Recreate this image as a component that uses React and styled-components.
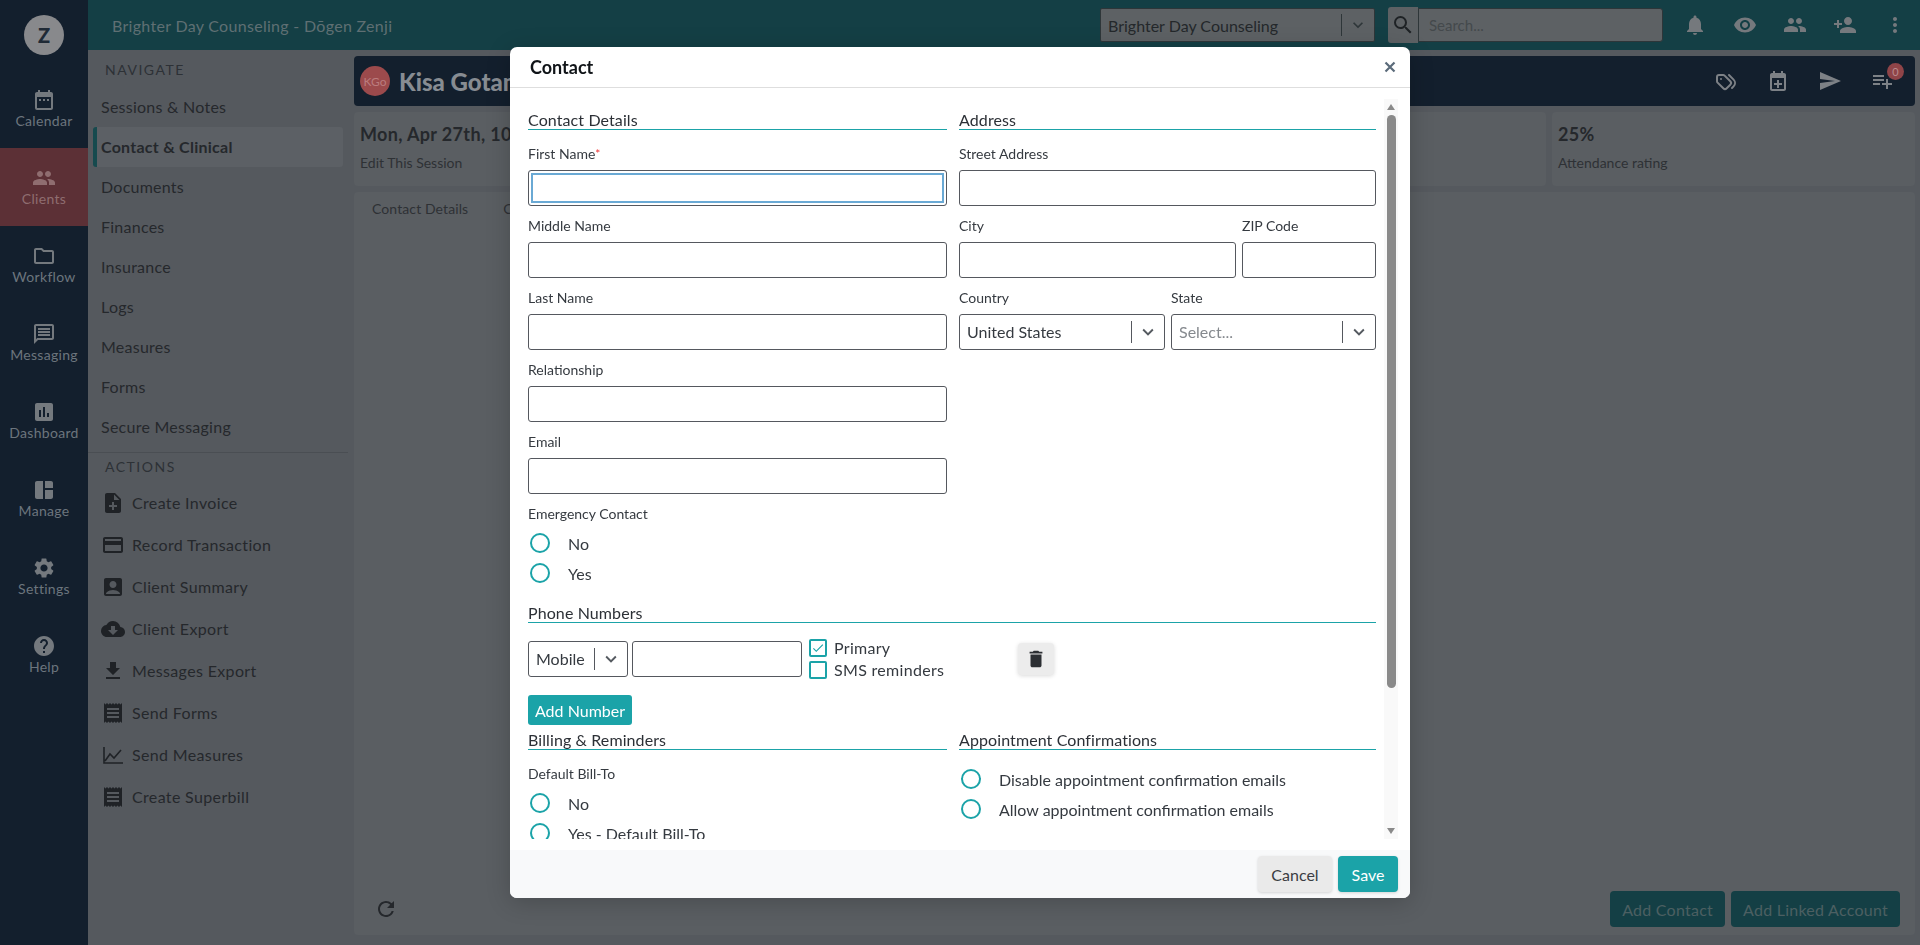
import React from "react";
import styled, { createGlobalStyle } from "styled-components";
import {
  MdDateRange, MdPeople, MdOutlineFolder, MdOutlineMessage, MdAssessment, MdSpaceDashboard,
  MdSettings, MdHelp, MdNoteAdd, MdCreditCard, MdAccountBox, MdCloudDownload, MdFileDownload,
  MdReceipt, MdNotifications, MdRemoveRedEye, MdPersonAdd, MdMoreVert, MdSearch, MdSend,
  MdPlaylistAdd, MdDelete, MdRefresh, MdKeyboardArrowDown, MdCheck,
} from "react-icons/md";
import { TbTags } from "react-icons/tb";

const FONT = `"Lato", "Liberation Sans", sans-serif`;

const Global = createGlobalStyle`
  html, body { margin: 0; padding: 0; height: 100%; overflow: hidden; background: #55595e; }
  * { box-sizing: border-box; }
  body { font-family: ${FONT}; color: #25282c; }
`;

const Page = styled.div`
  display: grid;
  grid-template-columns: 88px 1fr;
  width: 1920px;
  height: 945px;
  overflow: hidden;
`;
const Rail = styled.nav`
  background: #131f2d;
  display: flex;
  flex-direction: column;
`;
const RailTop = styled.div`
  height: 70px;
  display: flex;
  align-items: center;
  justify-content: center;
`;
const Avatar = styled.div`
  width: 40px;
  height: 40px;
  border-radius: 50%;
  background: #88898c;
  color: #1f2a36;
  display: flex;
  align-items: center;
  justify-content: center;
  font-weight: 900;
  font-size: 20px;
`;
const RailItem = styled.div`
  height: 78px;
  display: flex;
  flex-direction: column;
  align-items: center;
  justify-content: center;
  font-size: 14px;
  line-height: 18px;
  letter-spacing: 0.3px;
  color: ${(p) => (p.$active ? "#8f6d70" : "#6c757d")};
  background: ${(p) => (p.$active ? "#5c3036" : "transparent")};
  svg { width: 24px; height: 24px; color: ${(p) => (p.$active ? "#8f6d70" : "#74797e")}; }
`;
const Right = styled.div`
  display: flex;
  flex-direction: column;
  min-width: 0;
`;
const TopBar = styled.header`
  height: 50px;
  background: #143f45;
  display: flex;
  align-items: center;
  padding: 0 0 0 24px;
  flex: none;
`;
const Brand = styled.div`
  font-size: 16px;
  letter-spacing: 0.3px;
  color: #5f6f73;
  flex: 1;
`;
const TopSelect = styled.div`
  width: 275px;
  height: 34px;
  background: #5d6164;
  border: 1px solid #2e3639;
  border-radius: 2px;
  display: flex;
  align-items: center;
  padding-left: 7px;
  font-size: 16px;
  color: #24282b;
  margin-right: 13px;
`;
const TopSelectText = styled.span`
  flex: 1;
`;
const TopSep = styled.span`
  width: 1px;
  height: 22px;
  background: #2e3639;
`;
const TopChevron = styled.span`
  width: 32px;
  display: flex;
  justify-content: center;
  color: #2e3639;
  svg { width: 20px; height: 20px; }
`;
const SearchButton = styled.div`
  width: 30px;
  height: 36px;
  background: #5d6164;
  border-radius: 3px 0 0 3px;
  display: flex;
  align-items: center;
  justify-content: center;
  color: #1e2225;
  svg { width: 24px; height: 24px; }
`;
const SearchBox = styled.div`
  width: 245px;
  height: 34px;
  background: #5d6164;
  border: 1px solid #2e3639;
  border-radius: 0 3px 3px 0;
  display: flex;
  align-items: center;
  padding-left: 10px;
  font-size: 15px;
  color: #44494c;
  margin-right: 7px;
`;
const TopIcon = styled.span`
  width: 50px;
  display: flex;
  justify-content: center;
  color: #75797d;
  svg { width: 24px; height: 24px; }
`;
const Below = styled.div`
  flex: 1;
  display: grid;
  grid-template-columns: 266px 1fr;
  min-height: 0;
`;
const Side = styled.aside`
  background: #55595e;
  display: flex;
  flex-direction: column;
  padding-top: 10px;
`;
const SideHeading = styled.div`
  font-size: 14px;
  line-height: 20px;
  letter-spacing: 1.5px;
  color: #2d3136;
  padding-left: 17px;
  height: ${(p) => p.$h}px;
`;
const SideItem = styled.div`
  height: 40px;
  margin: 0 11px 0 5px;
  padding: 0 0 2px 4px;
  display: flex;
  align-items: center;
  font-size: 16px;
  letter-spacing: 0.25px;
  font-weight: ${(p) => (p.$active ? 700 : 400)};
  color: #25282c;
  background: ${(p) => (p.$active ? "#5c6065" : "transparent")};
  border-left: 4px solid ${(p) => (p.$active ? "#164a4e" : "transparent")};
  border-radius: 3px;
`;
const SideDivider = styled.div`
  height: 1px;
  background: #4a4e53;
  margin: 5px 6px 4px 0;
`;
const ActionItem = styled.div`
  height: 42px;
  display: flex;
  align-items: center;
  gap: 7px;
  padding-left: 13px;
  font-size: 16px;
  letter-spacing: 0.35px;
  color: #25282c;
  svg { width: 24px; height: 24px; color: #1f2226; flex: none; }
`;
const ActionText = styled.span`
  margin-bottom: 2px;
`;
const Main = styled.main`
  padding: 6px 5px 0 0;
  display: flex;
  flex-direction: column;
  gap: 6px;
  min-width: 0;
`;
const ClientBar = styled.div`
  height: 50px;
  background: #131f2d;
  border-radius: 4px;
  display: flex;
  align-items: center;
  padding: 0 7px 0 6px;
  flex: none;
`;
const ClientBadge = styled.div`
  width: 30px;
  height: 30px;
  border-radius: 50%;
  background: #9c4a4c;
  color: #bb7c7e;
  font-size: 12px;
  margin-right: 9px;
  display: flex;
  align-items: center;
  justify-content: center;
`;
const ClientName = styled.div`
  font-size: 24px;
  font-weight: 900;
  color: #878c92;
  flex: 1;
`;
const BarIcon = styled.span`
  position: relative;
  width: 52px;
  display: flex;
  justify-content: center;
  color: #7d8186;
  svg { width: 24px; height: 24px; }
`;
const Badge = styled.span`
  position: absolute;
  top: -6px;
  right: 4px;
  width: 17px;
  height: 17px;
  border-radius: 50%;
  background: #8f4448;
  color: #b98b8e;
  font-size: 11px;
  display: flex;
  align-items: center;
  justify-content: center;
`;
const Stats = styled.div`
  display: grid;
  grid-template-columns: 1fr 363px;
  gap: 6px;
  height: 74px;
  flex: none;
`;
const StatCard = styled.div`
  background: #5a5e62;
  border-radius: 4px;
  padding: 10px 6px;
  overflow: hidden;
`;
const StatTitle = styled.div`
  font-size: 18px;
  line-height: 24px;
  font-weight: 700;
  letter-spacing: 0.35px;
  color: #25282c;
  white-space: nowrap;
`;
const StatSub = styled.div`
  font-size: 14px;
  line-height: 18px;
  margin-top: 8px;
  color: #2e3135;
`;
const Panel = styled.div`
  height: 743px;
  flex: none;
  background: #5a5e62;
  border-radius: 4px;
  display: flex;
  flex-direction: column;
  padding: 0 15px 8px 18px;
`;
const Tabs = styled.div`
  display: flex;
  gap: 35px;
  font-size: 14px;
  line-height: 34px;
  letter-spacing: 0.1px;
  color: #2e3135;
  flex: 1;
`;
const PanelFooter = styled.div`
  display: flex;
  align-items: center;
  gap: 6px;
  margin-left: 2px;
`;
const RefreshIcon = styled.span`
  flex: 1;
  color: #25282c;
  display: flex;
  svg { width: 24px; height: 24px; }
`;
const DimButton = styled.div`
  height: 36px;
  padding: 0 12px;
  background: #143f45;
  color: #4c5f62;
  border-radius: 4px;
  font-size: 16px;
  letter-spacing: 0.25px;
  display: flex;
  align-items: center;
`;

/* Dialog */
const Dialog = styled.div`
  position: fixed;
  left: 510px;
  top: 47px;
  width: 900px;
  height: 851px;
  background: #fff;
  border-radius: 7px;
  box-shadow: 0 4px 24px rgba(0, 0, 0, 0.2);
  display: flex;
  flex-direction: column;
  overflow: hidden;
`;
const DialogHeader = styled.div`
  height: 41px;
  flex: none;
  border-bottom: 1px solid #dedede;
  display: flex;
  align-items: center;
  justify-content: space-between;
  padding: 0 14px 0 20px;
  font-size: 18px;
  font-weight: 700;
  color: #101418;
`;
const CloseIcon = styled.svg`
  width: 12px;
  height: 12px;
  color: #5b6b7a;
`;
const DialogBody = styled.div`
  flex: 1;
  display: flex;
  padding: 11px 12px 11px 18px;
  min-height: 0;
  overflow: hidden;
`;
const FormScroll = styled.div`
  width: 848px;
  height: 100%;
  padding-top: 9px;
  overflow: hidden;
  flex: none;
  display: flex;
  flex-direction: column;
  > * { flex: none; }
`;
const Scrollbar = styled.div`
  width: 14px;
  margin-left: 8px;
  background: #f9f9f9;
  display: flex;
  flex-direction: column;
  align-items: center;
  height: 100%;
`;
const ScrollArrow = styled.div`
  width: 0;
  height: 0;
  margin: 5px 0;
  border-left: 4px solid transparent;
  border-right: 4px solid transparent;
  ${(p) => (p.$down ? "border-top: 6px solid #8a8a8a; margin-top: auto;" : "border-bottom: 6px solid #8a8a8a;")}
`;
const ScrollThumb = styled.div`
  width: 9px;
  height: 573px;
  background: #8a8a8a;
  border-radius: 5px;
`;
const Columns = styled.div`
  display: grid;
  grid-template-columns: 419px 417px;
  column-gap: 12px;
`;
const Column = styled.div`
  display: flex;
  flex-direction: column;
  > * { flex: none; }
`;
const Section = styled.h3`
  margin: ${(p) => p.$mt || 0}px 0 4px;
  font-weight: 400;
  font-size: 16px;
  line-height: 24px;
  height: 22px;
  letter-spacing: 0.1px;
  color: #2c3036;
  border-bottom: 1px solid #1ba3a8;
`;
const Field = styled.div`
  margin-top: 12px;
`;
const Label = styled.div`
  font-size: 14px;
  line-height: 16px;
  height: 24px;
  color: #353a40;
`;
const Req = styled.span`
  color: #e33;
  font-size: 12px;
  vertical-align: top;
`;
const TextInput = styled.div`
  height: 36px;
  border: 1px solid #55585e;
  border-radius: 3px;
  background: #fff;
  ${(p) => (p.$focus ? "box-shadow: inset 0 0 0 2px #fff, inset 0 0 0 4px #6aa9d4;" : "")}
`;
const Row = styled.div`
  display: grid;
  grid-template-columns: ${(p) => p.$cols};
  column-gap: 6px;
`;
const Select = styled.div`
  height: 36px;
  border: 1px solid #55585e;
  border-radius: 3px;
  display: flex;
  align-items: center;
  padding: 0 0 1px 7px;
  font-size: 16px;
  color: ${(p) => (p.$placeholder ? "#85898e" : "#353a40")};
`;
const SelectValue = styled.span`
  flex: 1;
`;
const Sep = styled.span`
  width: 1px;
  height: 22px;
  background: #55585e;
`;
const Chevron = styled.span`
  width: 32px;
  display: flex;
  justify-content: center;
  color: #555a60;
  svg { width: 22px; height: 22px; }
`;
const RadioGroup = styled.div`
  display: flex;
  flex-direction: column;
  margin-top: ${(p) => p.$mt}px;
`;
const RadioRow = styled.div`
  height: 30px;
  flex: none;
  display: flex;
  align-items: center;
  padding-left: 2px;
  gap: 18px;
  font-size: 16px;
  color: #353a40;
`;
const Radio = styled.span`
  width: 20px;
  height: 20px;
  border: 2px solid #1ba3a8;
  border-radius: 50%;
  flex: none;
`;
const PhoneRow = styled.div`
  display: flex;
  align-items: center;
  margin-top: 12px;
`;
const PhoneType = styled.div`
  width: 100px;
`;
const PhoneNumber = styled.div`
  width: 170px;
  margin-left: 4px;
`;
const Checks = styled.div`
  display: flex;
  flex-direction: column;
  gap: 4px;
  margin-left: 7px;
  width: 209px;
`;
const CheckRow = styled.div`
  display: flex;
  align-items: center;
  gap: 7px;
  font-size: 16px;
  line-height: 18px;
  letter-spacing: 0.3px;
  color: #353a40;
`;
const CheckBox = styled.span`
  width: 18px;
  height: 18px;
  border: 2px solid #1ba3a8;
  border-radius: 2px;
  display: flex;
  align-items: center;
  justify-content: center;
  color: #1ba3a8;
  svg { width: 14px; height: 14px; }
`;
const TrashButton = styled.div`
  width: 36px;
  height: 32px;
  background: #ececec;
  border-radius: 4px;
  box-shadow: 0 1px 4px rgba(0, 0, 0, 0.15);
  display: flex;
  align-items: center;
  justify-content: center;
  color: #2c2f33;
  svg { width: 22px; height: 22px; }
`;
const AddNumber = styled.div`
  width: 104px;
  height: 30px;
  margin-top: 16px;
  background: #1ba3a8;
  color: #fff;
  border-radius: 3px;
  font-size: 16px;
  display: flex;
  align-items: center;
  justify-content: center;
`;
const DialogFooter = styled.div`
  height: 48px;
  flex: none;
  background: #f8f9fa;
  display: flex;
  justify-content: flex-end;
  align-items: center;
  gap: 6px;
  padding: 0 12px;
`;
const FooterButton = styled.div`
  height: 36px;
  width: ${(p) => p.$w}px;
  border-radius: 4px;
  font-size: 16px;
  display: flex;
  align-items: center;
  justify-content: center;
  background: ${(p) => (p.$primary ? "#1ba3a8" : "#eaeaea")};
  color: ${(p) => (p.$primary ? "#fff" : "#3a3d42")};
  box-shadow: 0 1px 3px rgba(0, 0, 0, 0.15);
`;

const rail = [
  ["Calendar", MdDateRange], ["Clients", MdPeople, true], ["Workflow", MdOutlineFolder],
  ["Messaging", MdOutlineMessage], ["Dashboard", MdAssessment], ["Manage", MdSpaceDashboard],
  ["Settings", MdSettings], ["Help", MdHelp],
];
const nav = ["Sessions & Notes", "Contact & Clinical", "Documents", "Finances", "Insurance", "Logs", "Measures", "Forms", "Secure Messaging"];
const ChartIcon = () => (
  <svg viewBox="0 0 24 24" fill="none" stroke="currentColor" strokeWidth="1.6">
    <path d="M3 4v16h19M4 18l5-7 4 4 7-8" />
  </svg>
);
const actions = [
  ["Create Invoice", MdNoteAdd], ["Record Transaction", MdCreditCard], ["Client Summary", MdAccountBox],
  ["Client Export", MdCloudDownload], ["Messages Export", MdFileDownload], ["Send Forms", MdReceipt],
  ["Send Measures", ChartIcon], ["Create Superbill", MdReceipt],
];
const CalendarPlus = () => (
  <svg viewBox="0 0 24 24" fill="currentColor">
    <path d="M18 4h-1V2h-2v2H9V2H7v2H6c-1.1 0-2 .9-2 2v14c0 1.1.9 2 2 2h12c1.1 0 2-.9 2-2V6c0-1.1-.9-2-2-2zm0 16H6V9h12v11zm-7-9h2v3h3v2h-3v3h-2v-3H8v-2h3v-3z" />
  </svg>
);

const SelectBox = ({ value, placeholder }) => (
  <Select $placeholder={placeholder}>
    <SelectValue>{value}</SelectValue>
    <Sep />
    <Chevron><MdKeyboardArrowDown /></Chevron>
  </Select>
);
const TextField = ({ label, req, focus }) => (
  <Field>
    <Label>{label}{req && <Req>*</Req>}</Label>
    <TextInput $focus={focus} />
  </Field>
);

export default function App() {
  return (
    <>
      <Global />
      <Page>
        <Rail>
          <RailTop><Avatar>Z</Avatar></RailTop>
          {rail.map(([t, I, a]) => (
            <RailItem key={t} $active={a}><I />{t}</RailItem>
          ))}
        </Rail>
        <Right>
          <TopBar>
            <Brand>Brighter Day Counseling - Dōgen Zenji</Brand>
            <TopSelect>
              <TopSelectText>Brighter Day Counseling</TopSelectText>
              <TopSep />
              <TopChevron><MdKeyboardArrowDown /></TopChevron>
            </TopSelect>
            <SearchButton><MdSearch /></SearchButton>
            <SearchBox>Search...</SearchBox>
            <TopIcon><MdNotifications /></TopIcon>
            <TopIcon><MdRemoveRedEye /></TopIcon>
            <TopIcon><MdPeople /></TopIcon>
            <TopIcon><MdPersonAdd /></TopIcon>
            <TopIcon><MdMoreVert /></TopIcon>
          </TopBar>
          <Below>
            <Side>
              <SideHeading $h={27}>NAVIGATE</SideHeading>
              {nav.map((n, i) => <SideItem key={n} $active={i === 1}>{n}</SideItem>)}
              <SideDivider />
              <SideHeading $h={25}>ACTIONS</SideHeading>
              {actions.map(([t, I]) => (
                <ActionItem key={t}><I /><ActionText>{t}</ActionText></ActionItem>
              ))}
            </Side>
            <Main>
              <ClientBar>
                <ClientBadge>KGo</ClientBadge>
                <ClientName>Kisa Gotami</ClientName>
                <BarIcon><TbTags /></BarIcon>
                <BarIcon><CalendarPlus /></BarIcon>
                <BarIcon><MdSend /></BarIcon>
                <BarIcon><MdPlaylistAdd /><Badge>0</Badge></BarIcon>
              </ClientBar>
              <Stats>
                <StatCard>
                  <StatTitle>Mon, Apr 27th, 10:00 am</StatTitle>
                  <StatSub>Edit This Session</StatSub>
                </StatCard>
                <StatCard>
                  <StatTitle>25%</StatTitle>
                  <StatSub>Attendance rating</StatSub>
                </StatCard>
              </Stats>
              <Panel>
                <Tabs><span>Contact Details</span><span>Clinical</span></Tabs>
                <PanelFooter>
                  <RefreshIcon><MdRefresh /></RefreshIcon>
                  <DimButton>Add Contact</DimButton>
                  <DimButton>Add Linked Account</DimButton>
                </PanelFooter>
              </Panel>
            </Main>
          </Below>
        </Right>
      </Page>
      <Dialog>
        <DialogHeader>
          Contact
          <CloseIcon viewBox="0 0 12 12" fill="none" stroke="currentColor" strokeWidth="2.2">
            <path d="M1.5 1.5l9 9M10.5 1.5l-9 9" />
          </CloseIcon>
        </DialogHeader>
        <DialogBody>
          <FormScroll>
            <Columns>
              <Column>
                <Section>Contact Details</Section>
                <TextField label="First Name" req focus />
                <TextField label="Middle Name" />
                <TextField label="Last Name" />
                <TextField label="Relationship" />
                <TextField label="Email" />
                <Field>
                  <Label>Emergency Contact</Label>
                  <RadioGroup $mt={-2}>
                    <RadioRow><Radio />No</RadioRow>
                    <RadioRow><Radio />Yes</RadioRow>
                  </RadioGroup>
                </Field>
              </Column>
              <Column>
                <Section>Address</Section>
                <TextField label="Street Address" />
                <Row $cols="277px 134px">
                  <TextField label="City" />
                  <TextField label="ZIP Code" />
                </Row>
                <Row $cols="206px 205px">
                  <Field><Label>Country</Label><SelectBox value="United States" /></Field>
                  <Field><Label>State</Label><SelectBox value="Select..." placeholder /></Field>
                </Row>
              </Column>
            </Columns>
            <Section $mt={13}>Phone Numbers</Section>
            <PhoneRow>
              <PhoneType><SelectBox value="Mobile" /></PhoneType>
              <PhoneNumber><TextInput /></PhoneNumber>
              <Checks>
                <CheckRow><CheckBox><MdCheck /></CheckBox>Primary</CheckRow>
                <CheckRow><CheckBox />SMS reminders</CheckRow>
              </Checks>
              <TrashButton><MdDelete /></TrashButton>
            </PhoneRow>
            <AddNumber>Add Number</AddNumber>
            <Columns>
              <Column>
                <Section $mt={3}>Billing &amp; Reminders</Section>
                <Field>
                  <Label>Default Bill-To</Label>
                  <RadioGroup $mt={-2}>
                    <RadioRow><Radio />No</RadioRow>
                    <RadioRow><Radio />Yes - Default Bill-To</RadioRow>
                  </RadioGroup>
                </Field>
              </Column>
              <Column>
                <Section $mt={3}>Appointment Confirmations</Section>
                <RadioGroup $mt={10}>
                  <RadioRow><Radio />Disable appointment confirmation emails</RadioRow>
                  <RadioRow><Radio />Allow appointment confirmation emails</RadioRow>
                </RadioGroup>
              </Column>
            </Columns>
          </FormScroll>
          <Scrollbar>
            <ScrollArrow />
            <ScrollThumb />
            <ScrollArrow $down />
          </Scrollbar>
        </DialogBody>
        <DialogFooter>
          <FooterButton $w={74}>Cancel</FooterButton>
          <FooterButton $w={60} $primary>Save</FooterButton>
        </DialogFooter>
      </Dialog>
    </>
  );
}
